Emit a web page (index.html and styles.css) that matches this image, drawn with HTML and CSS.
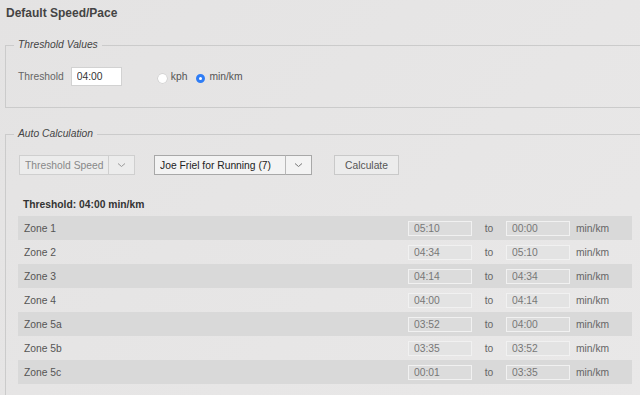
FILE: index.html
```html
<!DOCTYPE html>
<html lang="en">
<head>
  <meta charset="UTF-8">
  <title>Default Speed/Pace</title>
  <link rel="stylesheet" href="styles.css">
</head>
<body>
  <h1 class="title">Default Speed/Pace</h1>

  <fieldset class="group">
    <legend>Threshold Values</legend>
    <div class="threshold-row">
      <label class="field-label" for="threshold">Threshold</label>
      <input class="text-input" id="threshold" type="text" value="04:00">
      <div class="units">
        <label class="radio"><input type="radio" name="unit" value="kph"> kph</label>
        <label class="radio"><input type="radio" name="unit" value="minkm" checked> min/km</label>
      </div>
    </div>
  </fieldset>

  <fieldset class="group group-auto">
    <legend>Auto Calculation</legend>
    <div class="controls">
      <div class="select select-basis">
        <select disabled>
          <option>Threshold Speed</option>
        </select>
        <span class="caret"><svg width="9" height="6" viewBox="0 0 9 6"><path d="M1 1.5l3.5 3 3.5-3" fill="none" stroke="currentColor" stroke-width="1"/></svg></span>
      </div>
      <div class="select select-model">
        <select>
          <option>Joe Friel for Running (7)</option>
        </select>
        <span class="caret"><svg width="9" height="6" viewBox="0 0 9 6"><path d="M1 1.5l3.5 3 3.5-3" fill="none" stroke="currentColor" stroke-width="1"/></svg></span>
      </div>
      <button class="btn">Calculate</button>
    </div>

    <div class="zones-head">Threshold: 04:00 min/km</div>
    <div class="zones">
      <div class="zone"><span class="zone-name">Zone 1</span><input class="zone-input" value="05:10"><span class="to">to</span><input class="zone-input" value="00:00"><span class="unit">min/km</span></div>
      <div class="zone"><span class="zone-name">Zone 2</span><input class="zone-input" value="04:34"><span class="to">to</span><input class="zone-input" value="05:10"><span class="unit">min/km</span></div>
      <div class="zone"><span class="zone-name">Zone 3</span><input class="zone-input" value="04:14"><span class="to">to</span><input class="zone-input" value="04:34"><span class="unit">min/km</span></div>
      <div class="zone"><span class="zone-name">Zone 4</span><input class="zone-input" value="04:00"><span class="to">to</span><input class="zone-input" value="04:14"><span class="unit">min/km</span></div>
      <div class="zone"><span class="zone-name">Zone 5a</span><input class="zone-input" value="03:52"><span class="to">to</span><input class="zone-input" value="04:00"><span class="unit">min/km</span></div>
      <div class="zone"><span class="zone-name">Zone 5b</span><input class="zone-input" value="03:35"><span class="to">to</span><input class="zone-input" value="03:52"><span class="unit">min/km</span></div>
      <div class="zone"><span class="zone-name">Zone 5c</span><input class="zone-input" value="00:01"><span class="to">to</span><input class="zone-input" value="03:35"><span class="unit">min/km</span></div>
    </div>
  </fieldset>
</body>
</html>
```

FILE: styles.css
```css
body {
  margin: 0;
  font-family: 'Liberation Sans', Arial, sans-serif;
  font-size: 10.3px;
  color: #555;
  background: linear-gradient(135deg, #e4e3e3, #e9e8e8);
  overflow: hidden;
}

.title {
  margin: 0;
  padding: 5px 6px;
  font-size: 12px;
  line-height: 16px;
  color: #444;
}

.group {
  margin: 12px -20px 19px 5px;
  padding: 15px 12px 21px;
  border: 1px solid #cbcbcb;
}

.group legend {
  margin-left: -4px;
  padding: 0 4px;
  font-style: italic;
  line-height: 14px;
  color: #444;
}

.threshold-row {
  display: flex;
  align-items: center;
  height: 19px;
}

.field-label {
  color: #666;
  margin-right: 7px;
}

.text-input {
  box-sizing: border-box;
  width: 51px;
  height: 19px;
  padding: 0 5px;
  border: 1px solid #d2d2d2;
  background: #fff;
  font: inherit;
  color: #333;
  outline: none;
}

.units {
  display: flex;
  margin-left: 36px;
  gap: 9px;
}

.radio {
  display: flex;
  align-items: center;
  color: #555;
}

.radio input {
  appearance: none;
  width: 9px;
  height: 9px;
  margin: 3px 4px 0 0;
  border-radius: 50%;
  background: #fff;
  box-shadow: 0 0 0 0.5px #c4c4c4;
}

.radio input:checked {
  background: #fff;
  border: 3px solid #2f7df6;
  box-sizing: border-box;
  box-shadow: none;
}

.group-auto {
  margin-bottom: 0;
  padding-top: 14px;
  padding-bottom: 20px;
}

.controls {
  display: flex;
  align-items: center;
  height: 20px;
  padding-left: 1px;
}

.select {
  display: flex;
  height: 20px;
  box-sizing: border-box;
}

.select select {
  appearance: none;
  height: 100%;
  padding: 0 2px 0 5px;
  font: inherit;
  border: 1px solid #cfcfcf;
  border-right: none;
  background: #ececec;
  color: #888;
  outline: none;
}

.select .caret {
  display: flex;
  align-items: center;
  justify-content: center;
  width: 25px;
  border: 1px solid #cfcfcf;
  background: #ececec;
  color: #999;
}

.select-basis select {
  width: 89px;
  opacity: 1;
}

.select-model {
  margin-left: 19px;
}

.select-model select {
  width: 131px;
  border-color: #a8a8a8;
  background: #f3f3f3;
  color: #222;
}

.select-model .caret {
  border-color: #a8a8a8;
  border-left-color: #b8b8b8;
  background: #f3f3f3;
  color: #777;
}

.btn {
  margin-left: 22px;
  width: 65px;
  height: 20px;
  padding: 0;
  font: inherit;
  color: #555;
  background: #ececec;
  border: 1px solid #c9c9c9;
}

.zones-head {
  margin: 23px 0 4px;
  padding-left: 5px;
  font-weight: bold;
  line-height: 14px;
  color: #333;
}

.zones {
  width: 614px;
}

.zone {
  display: grid;
  grid-template-columns: 1fr 64px 34px 64px 62px;
  align-items: center;
  height: 24px;
  padding-left: 6px;
}

.zone:nth-child(odd) {
  background: #d9d9d9;
}

.zone-input {
  box-sizing: border-box;
  width: 64px;
  height: 15px;
  padding: 0 5px;
  font: inherit;
  color: #777;
  background: #dcdcdc;
  border: 1px solid #f1f1f1;
  outline: none;
}

.zone:nth-child(even) .zone-input {
  background: #e3e3e3;
}

.to {
  text-align: center;
  color: #666;
}

.unit {
  padding-left: 6px;
  color: #666;
}
```
